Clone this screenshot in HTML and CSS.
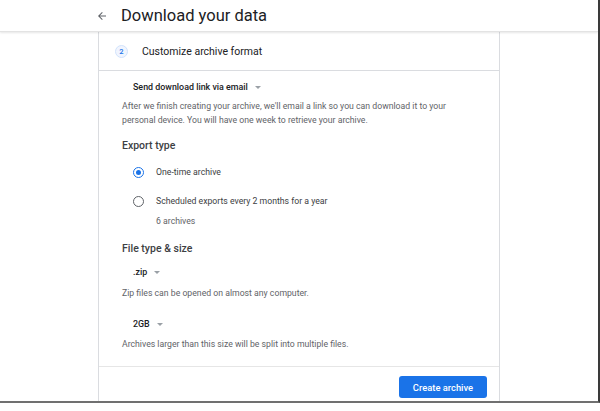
FILE: index.html
```html
<!DOCTYPE html>
<html lang="en">
<head>
<meta charset="utf-8">
<title>Download your data</title>
<link rel="stylesheet" href="styles.css">
</head>
<body>
<div class="screen">
  <header class="topbar">
    <span class="back" aria-label="Back">
      <svg width="12" height="12" viewBox="0 0 24 24"><path d="M20 11H7.83l5.59-5.59L12 4l-8 8 8 8 1.41-1.41L7.83 13H20v-2z" fill="#5f6368"/></svg>
    </span>
    <h1 class="title">Download your data</h1>
  </header>
  <main class="card">
    <div class="step-head">
      <span class="step-num">2</span>
      <span class="step-title">Customize archive format</span>
    </div>
    <div class="content">
      <div class="select select-delivery">Send download link via email <span class="caret"></span></div>
      <p class="desc">After we finish creating your archive, we'll email a link so you can download it to your personal device. You will have one week to retrieve your archive.</p>

      <h2 class="section">Export type</h2>
      <div class="radio-row">
        <span class="radio checked"></span>
        <span class="radio-label">One-time archive</span>
      </div>
      <div class="radio-row radio-row-2">
        <span class="radio"></span>
        <span class="radio-label">Scheduled exports every 2 months for a year</span>
      </div>
      <div class="sub">6 archives</div>

      <h2 class="section section-file">File type &amp; size</h2>
      <div class="select select-zip">.zip <span class="caret"></span></div>
      <p class="desc desc-zip">Zip files can be opened on almost any computer.</p>
      <div class="select select-size">2GB <span class="caret"></span></div>
      <p class="desc desc-size">Archives larger than this size will be split into multiple files.</p>
    </div>
    <div class="footer">
      <button class="primary">Create archive</button>
    </div>
  </main>
</div>
</body>
</html>
```

FILE: styles.css
```css
* { box-sizing: border-box; }
html, body {
  margin: 0;
  padding: 0;
  background: #ffffff;
  font-family: Roboto, "Liberation Sans", Arial, sans-serif;
}
body { width: 600px; height: 411px; overflow: hidden; }

.screen {
  width: 600px;
  height: 403px;
  border-right: 2px solid #3a3a3a;
  border-bottom: 2px solid #707070;
  display: flex;
  flex-direction: column;
  overflow: hidden;
}

.topbar {
  height: 32px;
  flex: 0 0 32px;
  display: flex;
  align-items: center;
  padding-left: 96px;
  border-bottom: 1px solid #e3e3e3;
  box-shadow: 0 1px 2px rgba(0,0,0,0.10);
  position: relative;
  z-index: 1;
  background: #fff;
}
.back { display: flex; width: 12px; height: 12px; margin-right: 13px; }
.title {
  margin: 0;
  font-size: 16.5px;
  font-weight: 400;
  color: #202124;
}

.card {
  margin-left: 98px;
  width: 402px;
  flex: 1;
  border-left: 1px solid #dadce0;
  border-right: 1px solid #dadce0;
  display: flex;
  flex-direction: column;
}

.step-head {
  height: 39px;
  flex: 0 0 39px;
  display: flex;
  align-items: center;
  padding-left: 16px;
  border-bottom: 1px solid #dadce0;
}
.step-num {
  width: 13px;
  height: 13px;
  border-radius: 50%;
  background: #f1f5fe;
  border: 1px solid #d2e3fc;
  color: #1a73e8;
  font-size: 7.5px;
  font-weight: 500;
  display: flex;
  align-items: center;
  justify-content: center;
  margin-right: 14px;
}
.step-title {
  font-size: 10.5px;
  color: #202124;
  font-weight: 400;
}

.content {
  flex: 1;
  padding: 10px 0 0 23px;
}

.select {
  display: flex;
  align-items: center;
  font-size: 8.9px;
  font-weight: 500;
  color: #202124;
  padding-left: 11px;
  height: 12px;
}
.caret {
  width: 0;
  height: 0;
  border-left: 3px solid transparent;
  border-right: 3px solid transparent;
  border-top: 3px solid #9aa0a6;
  margin-left: 7px;
}
.desc {
  margin: 6px 0 0 0;
  font-size: 8.7px;
  line-height: 14px;
  color: #5f6368;
  width: 350px;
}

.section {
  margin: 12px 0 0 0;
  font-size: 10.5px;
  font-weight: 500;
  color: #3c4043;
  height: 14px;
  line-height: 14px;
}

.radio-row {
  display: flex;
  align-items: center;
  margin-top: 12px;
  padding-left: 11px;
  height: 14px;
}
.radio-row-2 { margin-top: 15px; }
.radio {
  width: 11px;
  height: 11px;
  border-radius: 50%;
  border: 1.5px solid #5f6368;
  margin-right: 12px;
  display: flex;
  align-items: center;
  justify-content: center;
}
.radio.checked { border-color: #1a73e8; }
.radio.checked::after {
  content: "";
  width: 5px;
  height: 5px;
  border-radius: 50%;
  background: #1a73e8;
}
.radio-label {
  font-size: 8.7px;
  color: #3c4043;
}
.sub {
  margin-top: 7px;
  padding-left: 34px;
  font-size: 8.7px;
  color: #5f6368;
  height: 12px;
  line-height: 12px;
}

.section-file { margin-top: 15px; }
.select-zip { margin-top: 10px; }
.desc-zip { margin-top: 8px; }
.select-size { margin-top: 18px; }
.desc-size { margin-top: 7px; }

.footer {
  height: 35px;
  flex: 0 0 35px;
  border-top: 1px solid #e6e6e6;
  display: flex;
  justify-content: flex-end;
  align-items: flex-start;
  padding: 9px 12px 0 0;
}
.primary {
  width: 88px;
  height: 22px;
  border: none;
  border-radius: 3px;
  background: #1a73e8;
  color: #fff;
  font-family: Roboto, "Liberation Sans", Arial, sans-serif;
  font-size: 9.4px;
  font-weight: 500;
  padding: 0;
}
```
